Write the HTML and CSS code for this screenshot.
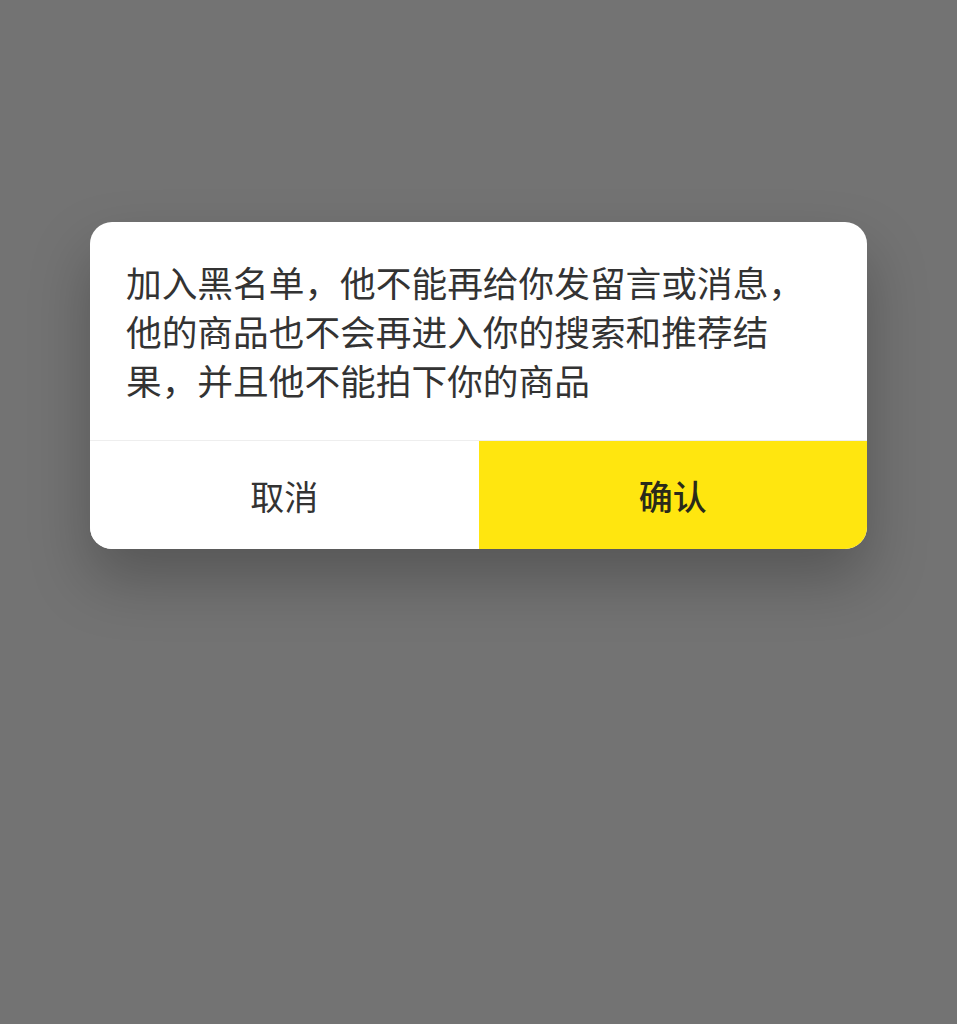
FILE: index.html
```html
<!DOCTYPE html>
<html lang="zh-CN">
<head>
<meta charset="utf-8">
<title>加入黑名单</title>
<link rel="stylesheet" href="styles.css">
</head>
<body>
<div class="overlay">
  <div class="dialog">
    <div class="dialog-body">
      <p class="message">加入黑名单，他不能再给你发留言或消息，<br>他的商品也不会再进入你的搜索和推荐结<br>果，并且他不能拍下你的商品</p>
    </div>
    <div class="dialog-actions">
      <button class="btn btn-cancel">取消</button>
      <button class="btn btn-confirm">确认</button>
    </div>
  </div>
</div>
</body>
</html>
```

FILE: styles.css
```css
html, body {
  margin: 0;
  padding: 0;
}
body {
  background: #737373;
  font-family: "Noto Sans CJK SC", "Noto Sans", sans-serif;
  color: #333333;
}
.overlay {
  width: 957px;
  height: 1024px;
  padding-top: 222px;
  box-sizing: border-box;
}
.dialog {
  width: 777px;
  margin: 0 auto;
  background: #ffffff;
  border-radius: 22px;
  overflow: hidden;
  box-shadow: 0 30px 60px rgba(0, 0, 0, 0.25);
}
.dialog-body {
  padding: 35px 36px 36px 36px;
  border-bottom: 1px solid #eeeeee;
}
.message {
  margin: 0;
  font-size: 35.7px;
  line-height: 49px;
  color: #333333;
}
.dialog-actions {
  display: flex;
  height: 108px;
}
.btn {
  flex: 1;
  border: 0;
  margin: 0;
  padding: 0;
  font-family: "Noto Sans CJK SC", "Noto Sans", sans-serif;
  font-size: 34px;
  color: #333333;
  background: #ffffff;
}
.btn-cancel {
  font-weight: 400;
}
.btn-confirm {
  background: #ffe60f;
  font-weight: 500;
  color: #2a2a1a;
}
```
